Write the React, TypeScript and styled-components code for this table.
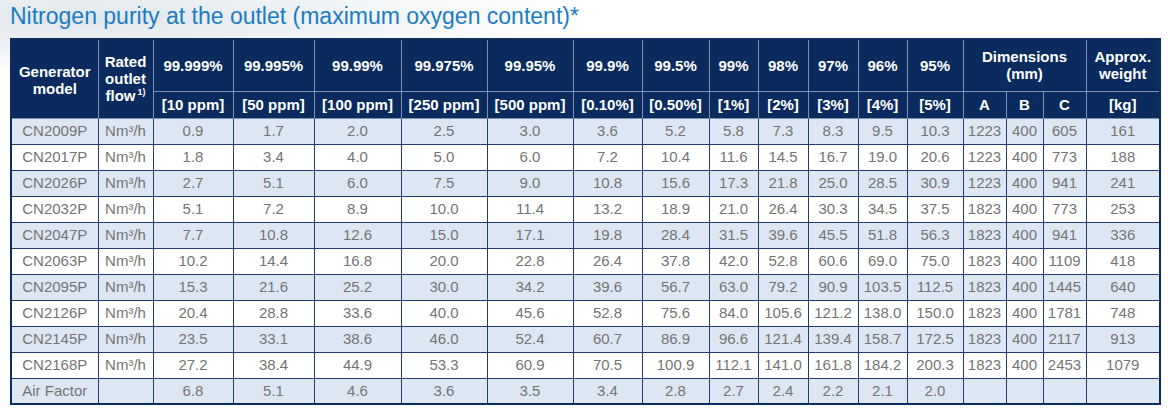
import React from "react";
import styled, { createGlobalStyle } from "styled-components";

const GlobalStyle = createGlobalStyle`
  html, body {
    margin: 0;
    padding: 0;
    background-color: #ffffff;
  }
  body {
    min-height: 413px;
    background-image: radial-gradient(ellipse 520px 60px at 80px 18px, rgba(214, 222, 230, 0.75), rgba(255,255,255,0) 100%);
    background-repeat: no-repeat;
    font-family: "Liberation Sans", Arial, Helvetica, sans-serif;
  }
`;

const Page = styled.div`
  padding: 0 0 0 10px;
  width: 1168px;
  box-sizing: border-box;
`;

const Title = styled.h1`
  margin: 0 0 8px 0;
  padding-top: 2px;
  font-size: 23px;
  line-height: 28px;
  font-weight: 400;
  color: #1b7cc2;
  letter-spacing: 0;
`;

const Table = styled.table`
  border-collapse: collapse;
  table-layout: fixed;
  width: 1149px;
  border: 2px solid #0d2d5f;
`;

const HeadRow = styled.tr<{ $h: number }>`
  height: ${(p) => p.$h}px;
`;

const Th = styled.th`
  background: #0b2b5e;
  color: #ffffff;
  font-weight: 700;
  font-size: 15px;
  line-height: 17px;
  text-align: center;
  vertical-align: middle;
  padding: 0;
  border: 1px solid #7e91b3;
  white-space: nowrap;
`;

const ThTall = styled(Th)`
  padding-top: 3px;
`;

const Sup = styled.span`
  font-size: 9px;
  vertical-align: 6px;
  line-height: 0;
  margin-left: 2px;
`;

const DataRow = styled.tr<{ $shade: boolean }>`
  height: 26px;
  background: ${(p) => (p.$shade ? "#dde7f4" : "#ffffff")};
`;

const Td = styled.td`
  border: 1px solid #1f3c6c;
  color: #747474;
  font-size: 15px;
  line-height: 18px;
  text-align: center;
  vertical-align: middle;
  padding: 0;
  white-space: nowrap;
`;

const widths = [87, 55, 80, 81, 87, 86, 86, 69, 67, 49, 50, 50, 49, 56, 43, 37, 43, 74];

const purities = [
  ["99.999%", "[10 ppm]"],
  ["99.995%", "[50 ppm]"],
  ["99.99%", "[100 ppm]"],
  ["99.975%", "[250 ppm]"],
  ["99.95%", "[500 ppm]"],
  ["99.9%", "[0.10%]"],
  ["99.5%", "[0.50%]"],
  ["99%", "[1%]"],
  ["98%", "[2%]"],
  ["97%", "[3%]"],
  ["96%", "[4%]"],
  ["95%", "[5%]"],
];

const rows: [string, string, string[]][] = [
  ["CN2009P", "Nm³/h", ["0.9", "1.7", "2.0", "2.5", "3.0", "3.6", "5.2", "5.8", "7.3", "8.3", "9.5", "10.3", "1223", "400", "605", "161"]],
  ["CN2017P", "Nm³/h", ["1.8", "3.4", "4.0", "5.0", "6.0", "7.2", "10.4", "11.6", "14.5", "16.7", "19.0", "20.6", "1223", "400", "773", "188"]],
  ["CN2026P", "Nm³/h", ["2.7", "5.1", "6.0", "7.5", "9.0", "10.8", "15.6", "17.3", "21.8", "25.0", "28.5", "30.9", "1223", "400", "941", "241"]],
  ["CN2032P", "Nm³/h", ["5.1", "7.2", "8.9", "10.0", "11.4", "13.2", "18.9", "21.0", "26.4", "30.3", "34.5", "37.5", "1823", "400", "773", "253"]],
  ["CN2047P", "Nm³/h", ["7.7", "10.8", "12.6", "15.0", "17.1", "19.8", "28.4", "31.5", "39.6", "45.5", "51.8", "56.3", "1823", "400", "941", "336"]],
  ["CN2063P", "Nm³/h", ["10.2", "14.4", "16.8", "20.0", "22.8", "26.4", "37.8", "42.0", "52.8", "60.6", "69.0", "75.0", "1823", "400", "1109", "418"]],
  ["CN2095P", "Nm³/h", ["15.3", "21.6", "25.2", "30.0", "34.2", "39.6", "56.7", "63.0", "79.2", "90.9", "103.5", "112.5", "1823", "400", "1445", "640"]],
  ["CN2126P", "Nm³/h", ["20.4", "28.8", "33.6", "40.0", "45.6", "52.8", "75.6", "84.0", "105.6", "121.2", "138.0", "150.0", "1823", "400", "1781", "748"]],
  ["CN2145P", "Nm³/h", ["23.5", "33.1", "38.6", "46.0", "52.4", "60.7", "86.9", "96.6", "121.4", "139.4", "158.7", "172.5", "1823", "400", "2117", "913"]],
  ["CN2168P", "Nm³/h", ["27.2", "38.4", "44.9", "53.3", "60.9", "70.5", "100.9", "112.1", "141.0", "161.8", "184.2", "200.3", "1823", "400", "2453", "1079"]],
  ["Air Factor", "", ["6.8", "5.1", "4.6", "3.6", "3.5", "3.4", "2.8", "2.7", "2.4", "2.2", "2.1", "2.0", "", "", "", ""]],
];

export default function App() {
  return (
    <>
      <GlobalStyle />
      <Page>
        <Title>Nitrogen purity at the outlet (maximum oxygen content)*</Title>
        <Table>
          <colgroup>
            {widths.map((w, i) => (
              <col key={i} style={{ width: w }} />
            ))}
          </colgroup>
          <thead>
            <HeadRow $h={52}>
              <ThTall rowSpan={2}>
                Generator
                <br />
                model
              </ThTall>
              <Th rowSpan={2}>
                Rated
                <br />
                outlet
                <br />
                flow<Sup>1)</Sup>
              </Th>
              {purities.map(([p]) => (
                <Th key={p}>{p}</Th>
              ))}
              <Th colSpan={3}>
                Dimensions
                <br />
                (mm)
              </Th>
              <Th>
                Approx.
                <br />
                weight
              </Th>
            </HeadRow>
            <HeadRow $h={27}>
              {purities.map(([p, s]) => (
                <Th key={p}>{s}</Th>
              ))}
              <Th>A</Th>
              <Th>B</Th>
              <Th>C</Th>
              <Th>[kg]</Th>
            </HeadRow>
          </thead>
          <tbody>
            {rows.map(([model, unit, vals], i) => (
              <DataRow key={model} $shade={i % 2 === 0}>
                <Td>{model}</Td>
                <Td>{unit}</Td>
                {vals.map((v, j) => (
                  <Td key={j}>{v}</Td>
                ))}
              </DataRow>
            ))}
          </tbody>
        </Table>
      </Page>
    </>
  );
}
